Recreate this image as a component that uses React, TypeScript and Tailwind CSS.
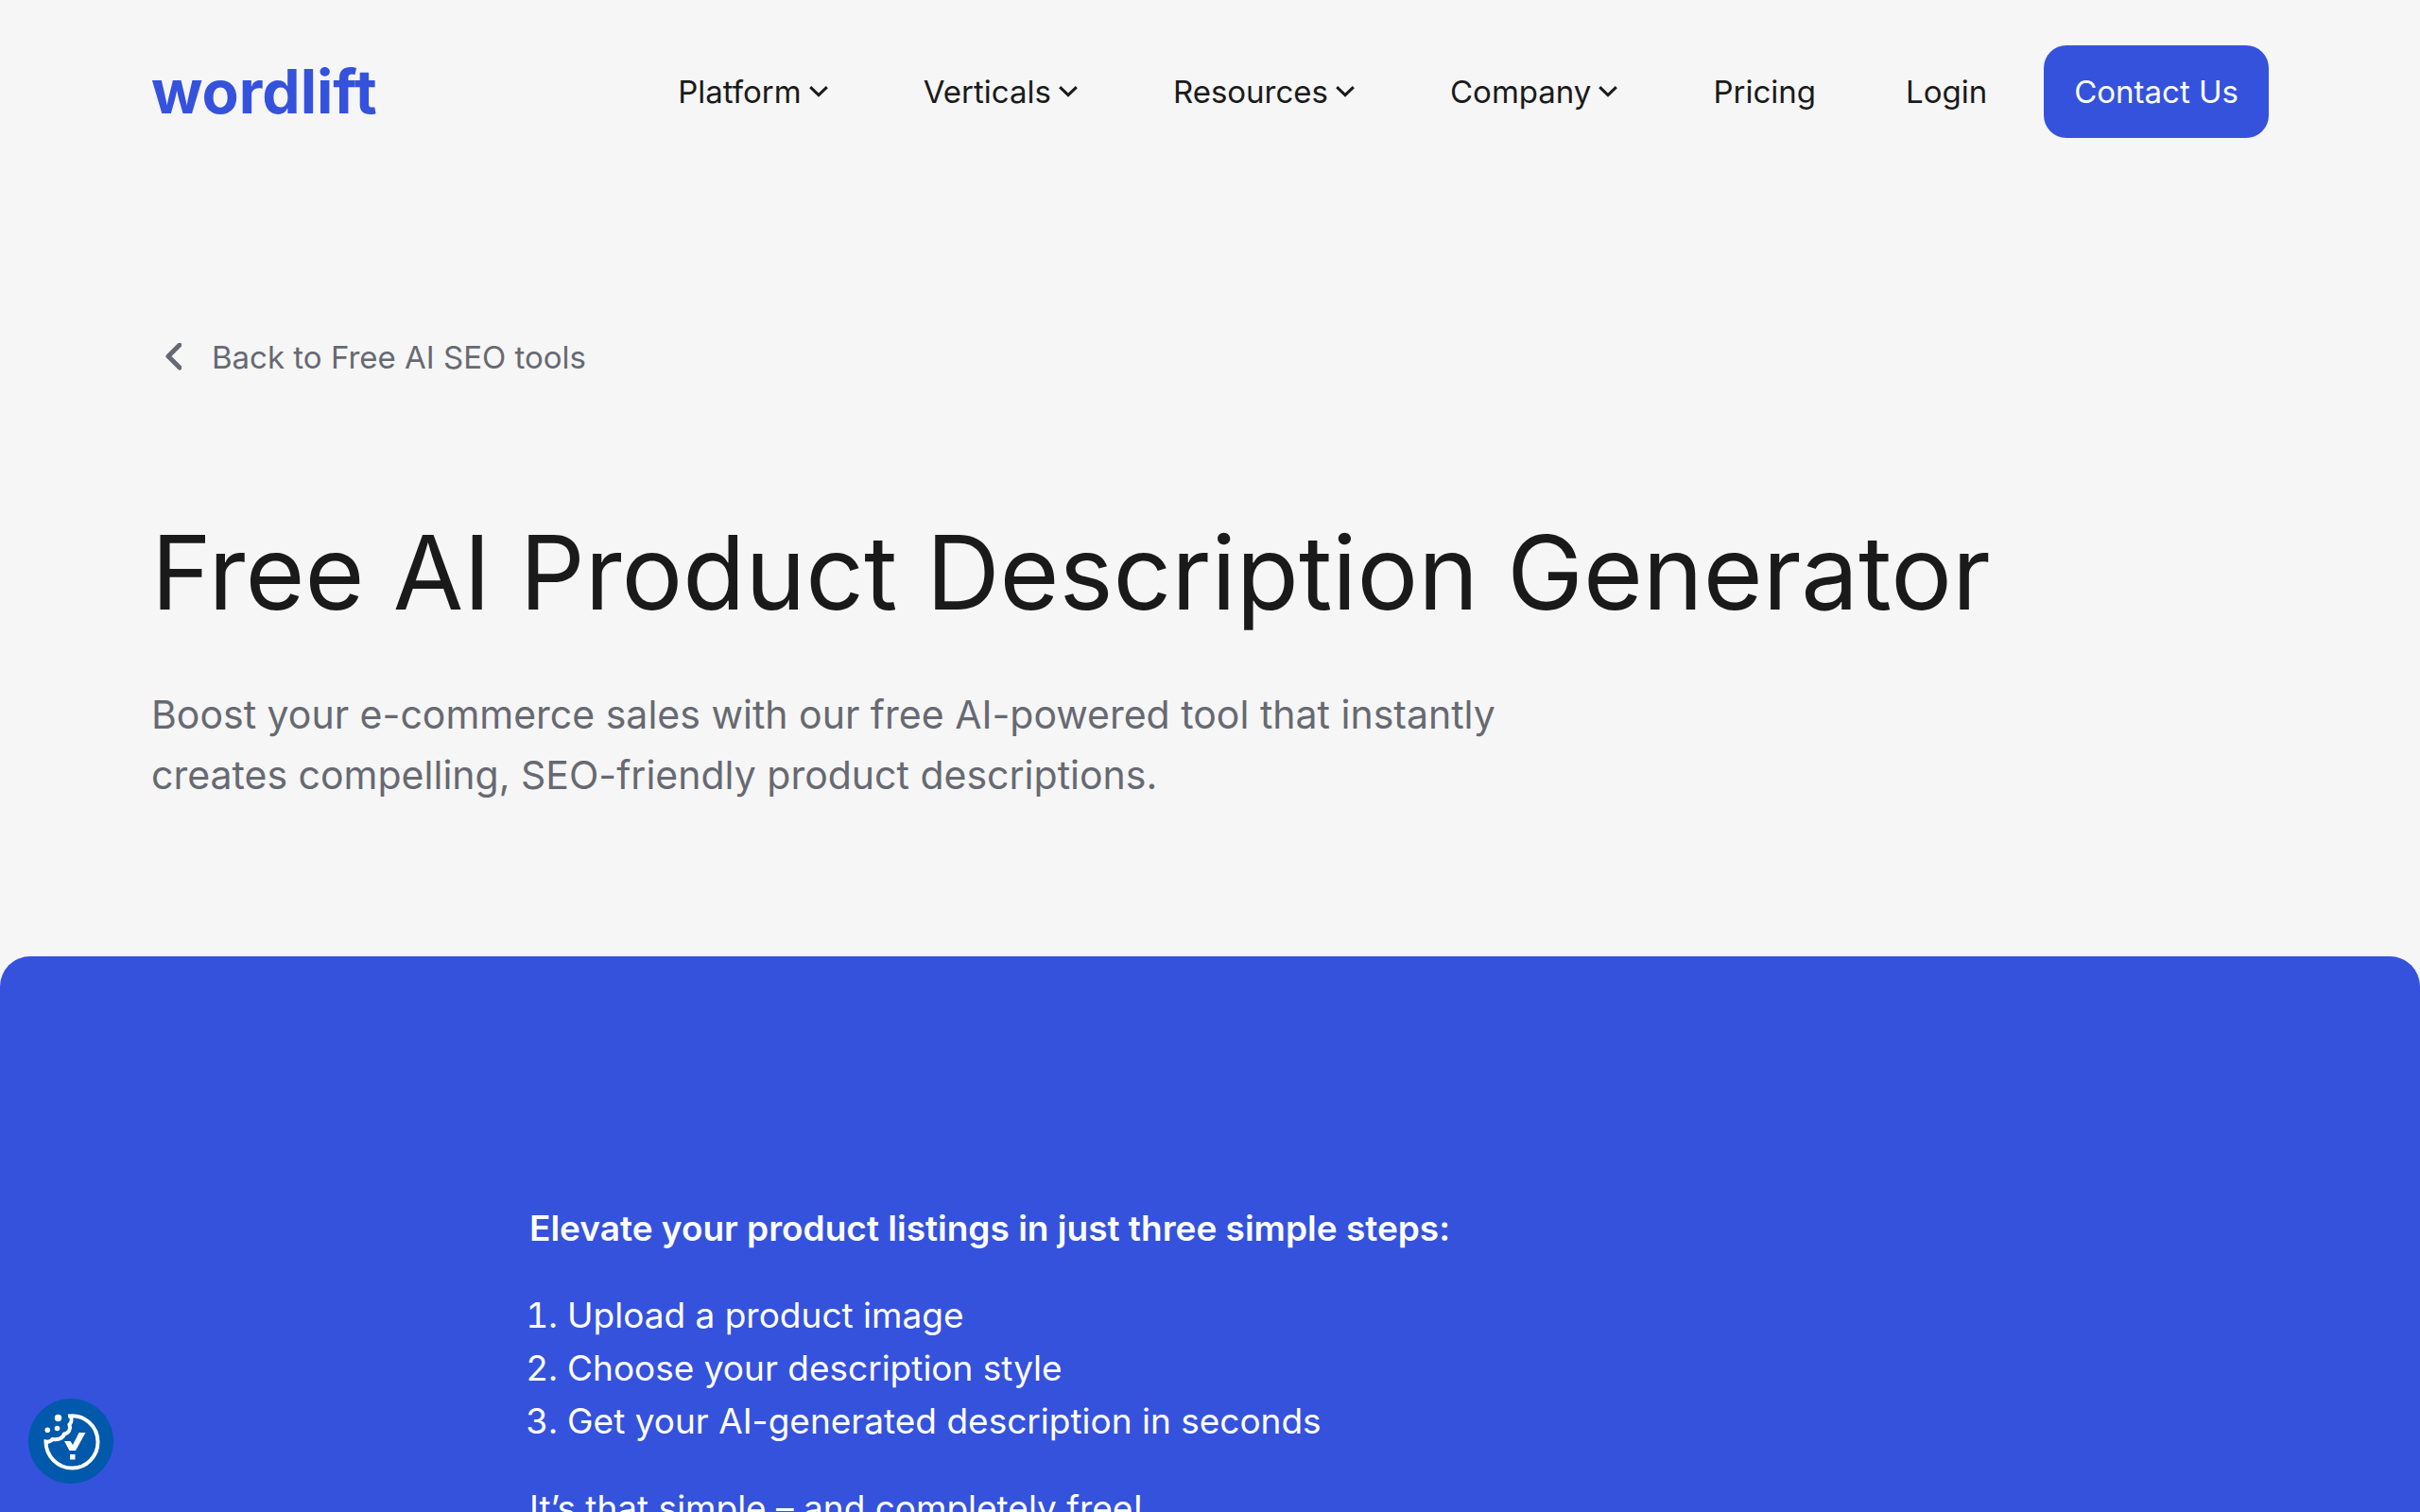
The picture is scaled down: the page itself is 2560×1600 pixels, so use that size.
const menus = ["Platform", "Verticals", "Resources", "Company"];

const steps = [
  "Upload a product image",
  "Choose your description style",
  "Get your AI-generated description in seconds",
];

function ChevronDown() {
  return (
    <svg width="20" height="12" viewBox="0 0 20 12" fill="none" aria-hidden="true">
      <path d="M1.2 1.2L10 9.6L18.8 1.2" stroke="currentColor" strokeWidth="3" />
    </svg>
  );
}

function ChevronLeft() {
  return (
    <svg width="18" height="30" viewBox="0 0 18 30" fill="none" aria-hidden="true">
      <path
        d="M16 2L4 14L16 26"
        stroke="currentColor"
        strokeWidth="5"
        strokeLinecap="round"
        strokeLinejoin="round"
      />
    </svg>
  );
}

function CookieIcon() {
  return (
    <svg width="90" height="90" viewBox="0 0 90 90" fill="none" aria-hidden="true">
      {/* Bitten cookie outline */}
      <path
        d="M42 18.5C59 16 73.5 29 73.5 46C73.5 61 61.5 73.5 46.5 73.5C31 73.5 18.5 61 18.5 45.5C21 46 23.5 45.5 25.5 43C31 44 36.5 42 38 37.5C43 36.5 45 32 43.5 27.5C46 25 46 21 44.5 18.5"
        stroke="white"
        strokeWidth="4"
      />
      <circle cx="31.5" cy="20.5" r="3.7" fill="white" />
      <circle cx="20.3" cy="33.3" r="2.8" fill="white" />
      <circle cx="30.5" cy="31.5" r="2.8" fill="white" />
      <path d="M38 45H44.5L47 49L53.5 36H60.5L50 55H43.5Z" fill="white" />
      <rect x="44" y="59" width="5.5" height="5.5" fill="white" />
    </svg>
  );
}

function Header() {
  return (
    <header className="flex items-center justify-between px-40 pt-12">
      <a href="/" className="text-[64px] leading-[64px] font-bold text-[#3552dd]">
        wordlift
      </a>
      <nav className="flex items-center text-[33px] leading-[48px]" aria-label="Main">
        <ul className="flex items-center gap-[95px]">
          {menus.map((name) => (
            <li key={name}>
              <button type="button" className="flex items-center gap-2 pr-1.5">
                {name}
                <ChevronDown />
              </button>
            </li>
          ))}
          <li>
            <a href="/pricing">Pricing</a>
          </li>
          <li>
            <a href="/login">Login</a>
          </li>
        </ul>
        <a href="/contact" className="ml-15 rounded-3xl bg-[#3552dd] px-8 py-[25px] text-white">
          Contact Us
        </a>
      </nav>
    </header>
  );
}

export default function App() {
  return (
    <div className="flex h-screen flex-col overflow-hidden bg-[#f6f6f6] font-['Inter',sans-serif] text-[#1a1a1a]">
      <Header />

      <main className="flex flex-1 flex-col">
        <div className="px-40 pt-52 pb-40">
          <a href="/tools" className="flex items-center gap-8 pl-3.5 text-[33px] leading-[48px] text-[#676972]">
            <ChevronLeft />
            Back to Free AI SEO tools
          </a>
          <h1 className="mt-[140px] text-[108px] leading-[128px]">Free AI Product Description Generator</h1>
          <p className="mt-[54px] max-w-[1480px] text-[41px] leading-[64px] text-[#676972]">
            Boost your e-commerce sales with our free AI-powered tool that instantly creates compelling,
            SEO-friendly product descriptions.
          </p>
        </div>

        <section className="flex-1 rounded-t-[32px] bg-[#3552dd] pt-[260px] text-[37px] leading-[56px] text-white">
          <div className="mx-auto max-w-[1440px] space-y-9">
            <p className="font-semibold">Elevate your product listings in just three simple steps:</p>
            <ol className="list-decimal pl-10">
              {steps.map((step) => (
                <li key={step}>{step}</li>
              ))}
            </ol>
            <p>It’s that simple – and completely free!</p>
          </div>
        </section>
      </main>

      <button
        type="button"
        aria-label="Consent preferences"
        className="fixed bottom-[30px] left-[30px] rounded-full bg-[#0059aa]"
      >
        <CookieIcon />
      </button>
    </div>
  );
}
